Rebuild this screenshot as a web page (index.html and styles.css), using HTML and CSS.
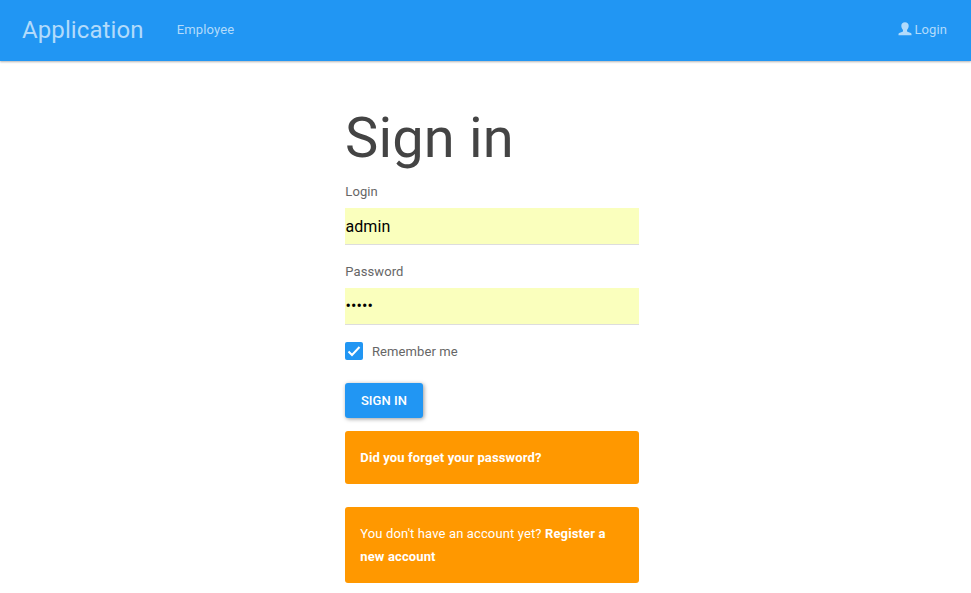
FILE: index.html
```html
<!DOCTYPE html>
<html lang="en">
<head>
<meta charset="utf-8">
<title>Sign in</title>
<link rel="stylesheet" href="styles.css">
</head>
<body>
<nav class="navbar">
  <a class="brand">Application</a>
  <a class="nav-link">Employee</a>
  <a class="nav-link login"><svg class="user" viewBox="0 0 14 14"><path d="M7 .3c2.200 0 3.700 1.200 3.700 3.400 0 1.700-.7 3.200-1.700 4.200v1.100c0 .3.2.6.5.7l3.300 1.200c.5.2.7.6.7 1.100v1.300H.5V12c0-.5.200-.9.700-1.100l3.300-1.200c.3-.1.500-.4.500-.7V7.900C4 6.900 3.300 5.400 3.300 3.700 3.300 1.500 4.800.3 7 .3z"/></svg>Login</a>
</nav>
<main class="content">
  <h1>Sign in</h1>
  <form>
    <div class="group"><label>Login</label><div class="field">admin</div></div>
    <div class="group"><label>Password</label><div class="field password">•••••</div></div>
    <div class="remember"><span class="check"><svg viewBox="0 0 18 18"><path d="M3.500 9.500l3.500 3.500 7.500-8"/></svg></span>Remember me</div>
    <button type="button">Sign in</button>
  </form>
  <div class="alert"><b>Did you forget your password?</b></div>
  <div class="alert">You don't have an account yet? <b>Register a new account</b></div>
</main>
</body>
</html>
```
FILE: styles.css
```css
* { box-sizing: border-box; }
body { margin: 0; height: 593px; overflow: hidden; background: #fff; color: #666; font: 13px/23px Roboto, sans-serif; letter-spacing: .1px; }
.navbar { height: 61px; padding: 0 24px 2px 22px; display: flex; align-items: center; background: #2196f3; box-shadow: 0 1px 2px rgba(0,0,0,.3); color: #b2dbfb; }
.brand { font-size: 24px; line-height: 24px; margin: 0 33px 0 0; }
.nav-link { letter-spacing: .15px; }
.login { margin-left: auto; display: flex; align-items: center; gap: 2px; letter-spacing: .1px; }
.user { width: 14px; height: 14px; margin-top: -2px; fill: currentColor; }
.content { width: 294px; margin-left: 345px; padding-top: 46px; }
h1 { margin: 0 0 11px; font-size: 56px; line-height: 62px; font-weight: 400; color: #444; letter-spacing: .15px; }
.group { height: 80px; }
label { display: block; height: 28px; padding-left: .3px; }
.field { height: 37px; padding-left: .4px; background: #faffbd; border-bottom: 1px solid #ddd; color: #000; font-size: 16px; line-height: 37px; }
.password { line-height: 36px; }
.remember { display: flex; align-items: center; height: 23px; }
.check { width: 18px; height: 18px; margin: -1px 9px 0 0; border-radius: 2px; background: #2196f3; }
.check svg { display: block; width: 18px; height: 18px; fill: none; stroke: #fff; stroke-width: 2; }
button { display: block; width: 78px; height: 35px; margin: 20px 0 13px; padding: 0; border: 0; border-radius: 3px; background: #2196f3; box-shadow: 1px 1px 4px rgba(0,0,0,.4); color: #fff; font: 500 13px Roboto, sans-serif; letter-spacing: .05px; text-transform: uppercase; }
.alert { padding: 15px 15px 15px 15.3px; margin-bottom: 23px; border-radius: 3px; background: #ff9800; color: #fff; letter-spacing: .13px; }
```
